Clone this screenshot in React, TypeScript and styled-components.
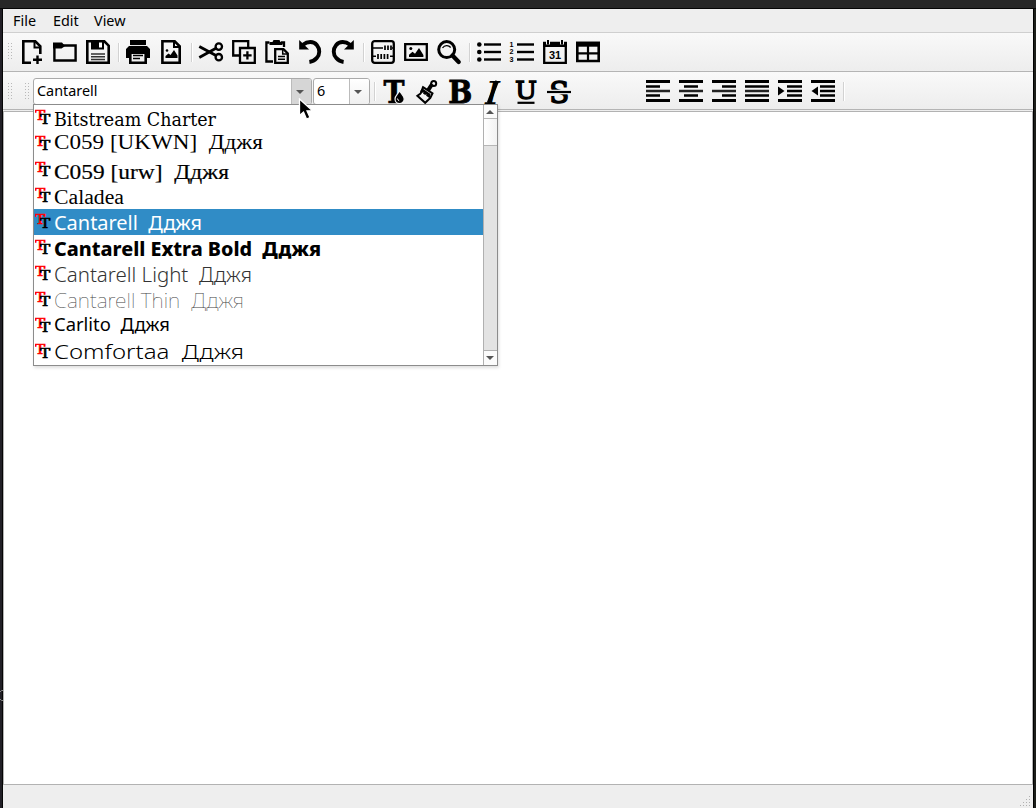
import React from 'react';
import styled, { createGlobalStyle } from 'styled-components';

const Global = createGlobalStyle`
  * { box-sizing: border-box; }
  body { margin: 0; background: #1f1f20; font-family: "Noto Sans", sans-serif; color: #000; overflow: hidden; }
  svg { display: block; flex: none; }
`;
const Desktop = styled.div`
  position: relative; width: 1036px; height: 808px; display: flex; flex-direction: column;
  background: linear-gradient(90deg, #211f26 0 2px, #050505 2px 3px, #333 3px 1033px, #000 1033px 1034px, #1c1e1a 1034px);
`;
const TitleEdge = styled.div`height: 9px; flex: none; background: #272727; border-bottom: 1px solid #050505;`;
const Frame = styled.div`flex: 1; margin: 0 3px; display: flex; flex-direction: column; background: #eee;`;
const Menu = styled.div`
  height: 24px; display: flex; gap: 16px; padding-left: 10px; border-bottom: 1px solid #cfcfcf;
  font-size: 14.4px; line-height: 23px; background: #eee;
`;
const MenuItem = styled.span<{ $w: number }>`width: ${p => p.$w}px; white-space: nowrap;`;
const Bar = styled.div<{ $h: number; $drop?: number }>`
  height: ${p => p.$h}px; display: flex; align-items: center; gap: 9px; padding: ${p => p.$drop ?? 0}px 0 0 5px; flex: none;
  background: linear-gradient(#f9f9f9, #ededed); border-bottom: 1px solid #b4b4b4;
`;
const Handle = styled.div<{ $after: number }>`
  width: 5px; height: 18px; margin-right: ${p => p.$after}px; flex: none;
  background-image: radial-gradient(circle at 0.5px 0.5px, #b9b9b9 0.6px, transparent 0.8px);
  background-size: 3px 3px;
`;
const Separator = styled.div<{ $l?: number; $r?: number }>`
  width: 2px; height: 19px; margin-left: ${p => p.$l ?? -1}px; margin-right: ${p => p.$r ?? -3}px; flex: none;
  background: linear-gradient(90deg, #d2d2d2 50%, #fff 50%);
`;
const Combo = styled.div<{ $w: number; $after: number }>`
  width: ${p => p.$w}px; height: 27px; margin-right: ${p => p.$after}px; flex: none; display: flex;
  border: 1px solid #aaa; border-radius: 3px; background: #fff; overflow: hidden; line-height: 24px;
`;
const ComboValue = styled.div`flex: 1; padding-left: 3px; font-size: 14.4px;`;
const ComboButton = styled.div<{ $open?: boolean }>`
  width: 20px; padding-right: 3px; display: flex; align-items: center; justify-content: center; border-left: 1px solid #bbb;
  background: ${p => (p.$open ? '#d6d6d6' : 'linear-gradient(#fff, #f0f0f0)')};
`;
const Gap = styled.div`width: 57px; flex: none;`;
const Page = styled.div`flex: 1; margin-top: 1px; border: 1px solid #b2b2b2; background: #fff;`;
const Status = styled.div`height: 23px; display: flex; justify-content: flex-end; align-items: flex-end; background: #eee;`;

const Popup = styled.div`
  position: absolute; left: 33px; top: 104px; width: 465px; height: 262px; display: flex;
  border: 1px solid #8c8c8c; background: #fff; box-shadow: 1px 2px 3px rgba(0,0,0,.13);
`;
const Rows = styled.div`flex: 1; min-width: 0;`;
const Row = styled.div<{ $on?: boolean }>`
  height: 26px; display: flex; padding-left: 1px; gap: 3px;
  background: ${p => (p.$on ? '#308cc6' : 'transparent')}; color: ${p => (p.$on ? '#fff' : '#000')};
`;
const Name = styled.svg`overflow: visible; white-space: pre;`;
const Scroll = styled.div`width: 14px; display: flex; flex-direction: column; border-left: 1px solid #b0b0b0; background: #e3e3e3;`;
const ScrollArrow = styled.div<{ $h?: number }>`
  height: ${p => p.$h ?? 14}px; padding-right: 1px; display: flex; align-items: center; justify-content: center; background: #fbfbfb;
`;
const Thumb = styled.div`height: 28px; border-top: 1px solid #b6b6b6; border-bottom: 1px solid #b6b6b6; background: linear-gradient(90deg,#fff,#f2f2f2);`;
const Track = styled.div`flex: 1; border-bottom: 1px solid #b0b0b0;`;
const Pointer = styled.svg`position: absolute; left: 298px; top: 98px;`;
const EdgeMark = styled.svg`position: absolute; left: 0; top: 689px;`;

const Icon = ({ children }: { children: React.ReactNode }) => (
  <svg width="24" height="24" viewBox="0 0 24 24" fill="none" stroke="#000" strokeWidth="2.6" overflow="visible">{children}</svg>
);
const Arrow = ({ up = false }: { up?: boolean }) => (
  <svg width="8" height="4" viewBox="0 0 8 4"><path d={up ? 'M0 4h8L4 0z' : 'M0 0h8L4 4z'} fill="#555" /></svg>
);
const Letter = ({ ch, x, y, w, size, weight = 700, italic = false, fill = '#000', edge = 0 }: {
  ch: string; x: number; y: number; w: number; size: number; weight?: number; italic?: boolean; fill?: string; edge?: number;
}) => (
  <text x={x} y={y} textLength={w} lengthAdjust="spacingAndGlyphs" fontSize={size} fontWeight={weight}
    fontStyle={italic ? 'italic' : 'normal'} fontFamily='"DejaVu Serif", serif' fill={fill}
    stroke={edge ? fill : 'none'} strokeWidth={edge}>{ch}</text>
);

const NewDoc = () => <Icon><path d="M11 22.7H3.3V1.3h12l5 5V14" /><path d="M14.5 1v6.5h6" strokeWidth="2" /><path d="M17.5 15.5v8.5M13 19.8h9" strokeWidth="2.4" /></Icon>;
const Folder = () => <Icon><path d="M1.4 5.5h21.2v15H1.4z" strokeWidth="2.4" /><path d="M0 2.5h9l2.5 3v1l-3 2H0z" fill="#000" stroke="none" /></Icon>;
const Save = () => <Icon><path d="M1.3 1.3h17l4.4 4.4v17H1.3z" /><path d="M5 1h13v8.5H5z" fill="#000" stroke="none" /><path d="M13 2.5h3v5h-3z" fill="#fff" stroke="none" /><path d="M5 14h14M5 16.8h14M5 19.5h14" strokeWidth="1.4" stroke="#333" /></Icon>;
const Print = () => <Icon><path d="M4 0h16v5H4zM3 6h18l3 3v9h-4v-5H4v5H0V9z" fill="#000" stroke="none" /><path d="M4.3 12.7h15.4v10H4.3z" /><path d="M7 15.5h10M7 18.5h7" strokeWidth="1.4" /><path d="M5 5.5h14" stroke="#ddd" strokeWidth=".7" /></Icon>;
const DocImage = () => <Icon><path d="M3.4 1.3h12.3l5 5v16.4H3.4z" /><path d="M15 1v6h6" strokeWidth="2" /><path d="M6.5 18v-2l3-2.5 2 1.5 3.5-5 3.5 5.5V18z" fill="#000" stroke="none" /><circle cx="8" cy="10.5" r="1.3" fill="#000" stroke="none" /></Icon>;
const Cut = () => <Icon><path d="M.3 6.4 17 15.5M.3 17.4 17 8.2" strokeWidth="2.8" /><circle cx="19.8" cy="6.6" r="3.2" strokeWidth="2.3" /><circle cx="19.8" cy="17.2" r="3.2" strokeWidth="2.3" /></Icon>;
const Copy = () => <Icon><path d="M7 15.5H1.2V1.2h15V7" strokeWidth="2.3" /><path d="M8 8h14.8v14.8H8z" strokeWidth="2.3" /><path d="M15.4 11.2v8.4M11.2 15.4h8.4" strokeWidth="2.3" /></Icon>;
const Paste = () => <Icon><path d="M8 21.5H1.4V2.5h3M16 2.5h3V7" strokeWidth="2.3" /><path d="M4.5 2h3l1-2h6l1 2h2v3h-13z" fill="#000" stroke="none" /><path d="M10.2 9.2h8.3l4.3 4.3v9.3H10.2z" strokeWidth="2.3" /><path d="M13 16.5h7M13 19.3h7" strokeWidth="1.4" /><path d="M17.7 9v5h5" strokeWidth="1.5" /></Icon>;
const Undo = () => <Icon><path d="M5 4.8C9.5 1 15.5 1 18.8 5s3.3 9.5-.2 13.2c-2 2.2-4.4 3.4-7.2 3.8" strokeWidth="3.9" /><path d="M1.2 0v9.6H11z" fill="#000" stroke="none" /></Icon>;
const Redo = () => <Icon><path d="M19 4.8C14.500 1 8.500 1 5.200 5s-3.300 9.500.2 13.200c2 2.200 4.400 3.400 7.200 3.800" strokeWidth="3.9" /><path d="M22.800 0v9.600H13z" fill="#000" stroke="none" /></Icon>;
const Abacus = () => <Icon><rect x="1.2" y="1.2" width="21.6" height="21.6" rx="2.5" strokeWidth="2.3" /><path d="M1 8h11M21 8h2M1 16.3h4M19 16.3h4" strokeWidth="1.6" /><path d="M14 5.5V10M17 5.5V10M20 5.5V10M7 14v5M10.2 14v5M13.4 14v5M16.6 14v5" strokeWidth="1.7" /></Icon>;
const Picture = () => <Icon><path d="M1.2 4.2h21.6v15.6H1.2z" strokeWidth="2.3" /><path d="M5 17v-2.3l3.5-3 2.5 2L15 8l4.4 7v2z" fill="#000" stroke="none" /><circle cx="6.8" cy="8.5" r="1.5" fill="#000" stroke="none" /></Icon>;
const Search = () => <Icon><circle cx="9.7" cy="9.6" r="8" strokeWidth="3" /><path d="m15.5 15.5 6.2 6.4" strokeWidth="4.3" strokeLinecap="round" /><path d="M5.5 8c2-3 6-3.2 8.2-.5" strokeWidth="1.3" /></Icon>;
const Bullets = () => <Icon>{[4.5, 12, 19.5].map(y => <React.Fragment key={y}><circle cx="2.3" cy={y} r="2.3" fill="#000" stroke="none" /><path d={`M7 ${y}h17`} strokeWidth="2.4" /></React.Fragment>)}</Icon>;
const Numbers = () => <Icon>{[4.5, 12, 19.5].map((y, i) => <React.Fragment key={y}><text x="-.4" y={y + 2.4} fontSize="7.2" fontWeight="700" fontFamily="Liberation Sans, sans-serif" fill="#000" stroke="none">{i + 1}</text><path d={`M7 ${y}h17`} strokeWidth="2.4" /></React.Fragment>)}</Icon>;
const Calendar = () => <Icon><path d="M1.2 3h21.6v19.8H1.2z" strokeWidth="2.3" /><path d="M0 2h24v5H0z" fill="#000" stroke="none" /><path d="M5 0v4.5M19 0v4.5" stroke="#f5f5f5" strokeWidth="4" /><path d="M5 0v4.5M19 0v4.5" strokeWidth="2" /><text x="12" y="18.8" textAnchor="middle" fontSize="11" fontWeight="700" fontFamily="Liberation Sans, sans-serif" fill="#000" stroke="none">31</text></Icon>;
const Table = () => <Icon><path d="M1.3 3h21.4v18H1.3z" /><path d="M0 1.7h24v5H0z" fill="#000" stroke="none" /><path d="M12 5v16M1 13.4h22" strokeWidth="2.2" /></Icon>;
const TextColor = () => <Icon><Letter ch="T" x={1.6} y={23.4} w={21} size={31.5} edge={0.7} /><path d="M17.6 11c1.900 3.200 4.600 5 4.600 8a4.600 4.600 0 0 1-9.200 0c0-3 2.700-4.800 4.600-8z" fill="#000" stroke="#f3f3f3" strokeWidth="1.200" /><path d="M15.400 18.500c.2 1.200.8 1.900 1.800 2.300" stroke="#fff" strokeWidth="1" /></Icon>;
const Brush = () => <Icon><path d="m8 7.200 9.500 6.200-2.200 4.600-5.100 4.800-7.800-7 3.200-2.200z" strokeWidth="2" /><path d="m5 11.300 9.700 7 .8-4.300-8-5.500z" fill="#000" stroke="none" /><path d="M13 10.300 17.200 4" strokeWidth="4" /><circle cx="18.700" cy="3.500" r="2.500" strokeWidth="2" /><path d="m8 12.500-1.500 3M11 14.500l-1.200 3.300" stroke="#fff" strokeWidth="1" /></Icon>;
const Bold = () => <Icon><Letter ch="B" x={0.2} y={23.3} w={24} size={31.5} edge={0.9} /></Icon>;
const Italic = () => <Icon><Letter ch="I" x={4} y={23.5} w={15} size={32} weight={400} italic /><path d="M16.200 1 7.600 23" strokeWidth="3.700" /></Icon>;
const Underline = () => <Icon><Letter ch="U" x={1} y={18.500} w={22} size={25} weight={400} edge={1.3} /><path d="M3.500 22.800h17" strokeWidth="2.200" /></Icon>;
const Strike = () => <Icon><Letter ch="S" x={2.300} y={22.900} w={20} size={30} weight={400} edge={1.5} /><path d="M3 12h18" strokeWidth="4.600" stroke="#f4f4f4" /><path d="M0 12h24" strokeWidth="2.200" /></Icon>;

const Lines = ({ kind }: { kind: string }) => {
  const short: Record<string, string> = {
    left: 'M0 6.5h14M0 15.5h14', center: 'M5 6.5h14M5 15.5h14', right: 'M10 6.5h14M10 15.5h14', full: 'M0 6.5h24M0 15.5h24',
  };
  const shift = !short[kind];
  return (
    <Icon>
      <path d="M0 1.5h24M0 20.5h24" strokeWidth="2.8" />
      {shift ? <>
        <path d="M9 6.5h15M9 11h15M9 15.5h15" strokeWidth="2.3" />
        <path d={kind === 'indent' ? 'M0 6.5v9L6.5 11z' : 'M7 6.5v9L.5 11z'} fill="#000" stroke="none" />
      </> : <><path d="M0 11h24" strokeWidth="2.5" stroke="#222" /><path d={short[kind]} strokeWidth="2.3" /></>}
    </Icon>
  );
};

type FontItem = { t: string; w: number; b: number; f: string; s: number; k?: number; wt?: number; c?: string };
const fonts: FontItem[] = [
  { t: 'Bitstream Charter', w: 162, b: 21, f: 'DejaVu Serif Condensed', s: 18.5 },
  { t: 'C059 [UKWN]\u00a0 Дджя', w: 209, b: 18, f: 'Liberation Serif', s: 20.5 },
  { t: 'C059 [urw]\u00a0 Дджя', w: 175, b: 22, f: 'Liberation Serif', s: 20.5, k: 0.2 },
  { t: 'Caladea', w: 70, b: 21, f: 'Liberation Serif', s: 20.5 },
  { t: 'Cantarell\u00a0 Дджя', w: 148, b: 21, f: 'Noto Sans', s: 19.5 },
  { t: 'Cantarell Extra Bold\u00a0 Дджя', w: 267, b: 21, f: 'Noto Sans', s: 19.5, wt: 800 },
  { t: 'Cantarell Light\u00a0 Дджя', w: 198, b: 21, f: 'Noto Sans', s: 19.5, wt: 300, c: '#333' },
  { t: 'Cantarell Thin\u00a0 Дджя', w: 190, b: 21, f: 'Noto Sans', s: 19.5, wt: 100, c: '#444' },
  { t: 'Carlito\u00a0 Дджя', w: 116, b: 18, f: 'Noto Sans', s: 18 },
  { t: 'Comfortaa\u00a0 Дджя', w: 190, b: 20, f: 'Noto Sans', s: 20, wt: 300 },
];

const FontRow = ({ d, on }: { d: FontItem; on: boolean }) => (
  <Row $on={on}>
    <svg width="16" height="26" viewBox="0 0 16 26">
      <Letter ch="T" x={-0.1} y={15.2} w={10.2} size={12.4} weight={400} fill="#f00" edge={0.7} />
      <Letter ch="T" x={4.9} y={19.1} w={10.2} size={12.4} weight={400} edge={0.7} />
    </svg>
    <Name width={d.w} height="26">
      <text x="0" y={d.b} fontSize={d.s} fontFamily={`"${d.f}", sans-serif`} fontWeight={d.wt ?? 400}
        textLength={d.w} lengthAdjust="spacingAndGlyphs" fill={on ? '#fff' : d.c ?? '#000'}
        stroke={d.k ? '#000' : 'none'} strokeWidth={d.k}>{d.t}</text>
    </Name>
  </Row>
);

export default function App() {
  return (
    <>
      <Global />
      <Desktop>
        <TitleEdge />
        <Frame>
          <Menu><MenuItem $w={24}>File</MenuItem><MenuItem $w={25}>Edit</MenuItem><MenuItem $w={33}>View</MenuItem></Menu>
          <Bar $h={39}>
            <Handle $after={-2} />
            <NewDoc /><Folder /><Save /><Separator /><Print /><DocImage /><Separator />
            <Cut /><Copy /><Paste /><Undo /><Redo /><Separator />
            <Abacus /><Picture /><Search /><Separator />
            <Bullets /><Numbers /><Calendar /><Table />
          </Bar>
          <Bar $h={38} $drop={2}>
            <Handle $after={3} /><Handle $after={-6} />
            <Combo $w={279} $after={-8}><ComboValue>Cantarell</ComboValue><ComboButton $open><Arrow /></ComboButton></Combo>
            <Combo $w={57} $after={-4}><ComboValue>6</ComboValue><ComboButton><Arrow /></ComboButton></Combo>
            <Separator $l={-1} $r={-3} />
            <TextColor /><Brush /><Bold /><Italic /><Underline /><Strike />
            <Gap />
            {['left', 'center', 'right', 'full', 'indent', 'outdent'].map(k => <Lines key={k} kind={k} />)}
            <Separator />
          </Bar>
          <Page />
          <Status>
            <svg width="14" height="14" viewBox="0 0 14 14" fill="#b0b0b0">
              {[[10, 2], [10, 5], [7, 5], [10, 8], [7, 8], [4, 8], [10, 11], [7, 11], [4, 11], [1, 11]].map(([x, y]) => <rect key={`${x}-${y}`} x={x} y={y} width="1" height="1" />)}
            </svg>
          </Status>
        </Frame>
        <Popup>
          <Rows>{fonts.map((d, i) => <FontRow key={d.t} d={d} on={i === 4} />)}</Rows>
          <Scroll>
            <ScrollArrow $h={13}><Arrow up /></ScrollArrow><Thumb /><Track /><ScrollArrow><Arrow /></ScrollArrow>
          </Scroll>
        </Popup>
        <Pointer width="16" height="24" viewBox="0 0 16 24">
          <path d="M1.5 1v16.5l4-3.5 3 7 3.5-1.5-3-6.7h5.5z" fill="#000" stroke="#fff" strokeWidth="1.3" />
        </Pointer>
        <EdgeMark width="3" height="14" viewBox="0 0 3 14"><path d="M3 1.5H1.500L0 3M0 10l1.500 1.500H3" stroke="#888" fill="none" /></EdgeMark>
      </Desktop>
    </>
  );
}
